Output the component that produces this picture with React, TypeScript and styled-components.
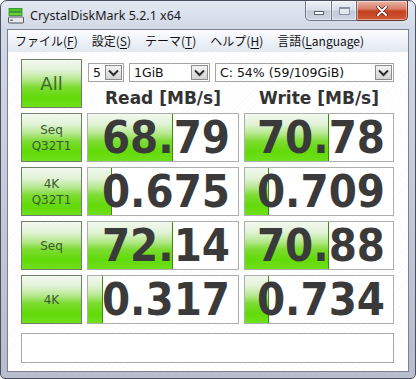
import React from 'react';
import styled, { createGlobalStyle } from 'styled-components';

const GlobalStyle = createGlobalStyle`
  html, body { margin: 0; padding: 0; background: #ffffff; }
  body { font-family: "DejaVu Sans", sans-serif; }
  * { box-sizing: border-box; }
`;

const Window = styled.div`
  width: 416px;
  height: 379px;
  border: 1px solid #4a5060;
  border-radius: 7px 7px 5px 5px;
  background: linear-gradient(180deg, #e3e9f2 0px, #d2d9e6 28px, #c4c9d8 55%, #b8bccd 100%);
  display: flex;
  flex-direction: column;
  padding: 0 6px 6px;
  overflow: hidden;
`;

const TitleBar = styled.div`
  height: 28px;
  display: flex;
  align-items: center;
  flex-shrink: 0;
`;

const TitleIcon = styled.svg`
  width: 16px;
  height: 16px;
  margin-left: 1px;
  margin-top: 1px;
`;

const TitleText = styled.span`
  margin-left: 6px;
  font-family: "Noto Sans", "DejaVu Sans", sans-serif;
  font-size: 12.5px;
  color: #1a1a1a;
`;

const Controls = styled.div`
  margin-left: auto;
  margin-right: 1px;
  align-self: flex-start;
  display: flex;
  height: 20px;
`;

const CtrlButton = styled.div<{ $kind: 'min' | 'max' | 'close' }>`
  height: 20px;
  width: ${p => (p.$kind === 'close' ? '51px' : p.$kind === 'min' ? '27px' : '25px')};
  display: flex;
  align-items: center;
  justify-content: center;
  border: 1px solid ${p => (p.$kind === 'close' ? '#6e3328' : '#6b7688')};
  border-top: none;
  border-left-width: ${p => (p.$kind === 'min' ? '1px' : '0')};
  border-radius: ${p => (p.$kind === 'min' ? '0 0 0 5px' : p.$kind === 'close' ? '0 0 5px 0' : '0')};
  background: ${p =>
    p.$kind === 'close'
      ? 'linear-gradient(180deg, #eab6a6 0%, #d9826a 40%, #c4401f 55%, #cf5a34 100%)'
      : 'linear-gradient(180deg, #edf1f7 0%, #d9e0ea 45%, #c2cbd9 55%, #cfd6e2 100%)'};
  box-shadow: inset 0 0 0 1px rgba(255, 255, 255, 0.45);
`;

const MinGlyph = styled.div`
  width: 10px;
  height: 4px;
  margin-top: 5px;
  background: #fff;
  border: 1px solid #5a6374;
`;

const MaxGlyph = styled.div`
  width: 11px;
  height: 8px;
  border: 1px solid #8a93a3;
  border-top-width: 2px;
  background: rgba(255, 255, 255, 0.5);
`;

const Client = styled.div`
  flex: 1;
  display: flex;
  flex-direction: column;
  border: 1px solid #7a8090;
  background-color: #ffffff;
`;

const MenuBar = styled.div`
  height: 22px;
  display: flex;
  align-items: center;
  background: linear-gradient(180deg, #fbfcfe 0%, #eef2f8 50%, #e3e8f1 100%);
  border-bottom: 1px solid #e4e8ef;
  flex-shrink: 0;
`;

const MenuItem = styled.span`
  padding: 0 7px;
  font-family: "Noto Sans CJK JP", "Noto Sans", sans-serif;
  font-size: 12px;
  line-height: 20px;
  color: #111;
  u { text-underline-offset: 2px; }
`;

const Content = styled.div`
  flex: 1;
  display: flex;
  flex-direction: column;
  padding: 7px 14px 8px 13px;
  background-image: repeating-linear-gradient(135deg, rgba(0,0,0,0.018) 0 1px, transparent 1px 4px);
`;

const Board = styled.div`
  display: grid;
  grid-template-columns: 61px 152px 150px;
  grid-auto-rows: 49px;
  gap: 5px;
`;

const greenGradient = `linear-gradient(180deg, #f3f8ef 0%, #e1f2d6 22%, #b4e88c 42%, #7ddc33 58%, #63da08 80%, #6fe01c 100%)`;

const TestButton = styled.div<{ $big?: boolean }>`
  border: 1px solid #6f7f6c;
  background: ${greenGradient};
  display: flex;
  flex-direction: column;
  align-items: center;
  justify-content: center;
  font-family: "DejaVu Sans", sans-serif;
  font-size: ${p => (p.$big ? '18px' : '12px')};
  line-height: ${p => (p.$big ? '20px' : '16px')};
  color: ${p => (p.$big ? '#3d6a28' : '#3b5a30')};
`;

const TopRight = styled.div`
  grid-column: 2 / 4;
  display: grid;
  grid-template-columns: 152px 150px;
  grid-template-rows: 19px 1fr;
  column-gap: 5px;
  padding-top: 4px;
`;

const SelectRow = styled.div`
  grid-column: 1 / 3;
  display: flex;
  gap: 5px;
  padding-left: 1px;
`;

const Select = styled.div<{ $w: number }>`
  width: ${p => p.$w}px;
  height: 19px;
  border: 1px solid #a4a4a4;
  background: #fff;
  display: flex;
  align-items: center;
  padding: 1px;
`;

const SelectText = styled.span`
  flex: 1;
  padding-left: 3px;
  font-family: "DejaVu Sans", sans-serif;
  font-size: 12.5px;
  color: #111;
  white-space: nowrap;
`;

const SelectArrow = styled.div`
  width: 17px;
  height: 15px;
  border: 1px solid #8c8c8c;
  background: linear-gradient(180deg, #f4f4f4 0%, #e4e4e4 50%, #d2d2d2 100%);
  display: flex;
  align-items: center;
  justify-content: center;
`;

const Header = styled.div`
  display: flex;
  align-items: center;
  justify-content: center;
  font-family: "DejaVu Sans", sans-serif;
  font-weight: bold;
  font-size: 17px;
  color: #333333;
  padding-top: 6px;
`;

const ScoreCell = styled.div`
  position: relative;
  border: 1px solid #aeaeae;
  background: #ffffff;
  display: flex;
  align-items: center;
  justify-content: flex-end;
  padding-right: 8px;
`;

const Meter = styled.div`
  position: absolute;
  left: 0;
  top: 0;
  bottom: 0;
  background: ${greenGradient};
  border-right: 1px solid #3f8a12;
`;

const ScoreText = styled.span`
  position: relative;
  font-family: "DejaVu Sans Condensed", "DejaVu Sans", sans-serif;
  font-stretch: condensed;
  font-weight: bold;
  font-size: 45px;
  line-height: 45px;
  color: #3a3a3a;
`;

const CommentBox = styled.div`
  margin-top: 9px;
  height: 30px;
  border: 1px solid #a9a9a9;
  background: #ffffff;
`;

const Chevron = () => (
  <svg width="11" height="8" viewBox="0 0 11 8">
    <path d="M1 1.5 L5.5 6 L10 1.5" fill="none" stroke="#2b2b2b" strokeWidth="2" />
  </svg>
);

const DiskIcon = () => (
  <TitleIcon viewBox="0 0 16 16">
    <rect x="1" y="0.5" width="13" height="3" fill="#49c42a" stroke="#2f8a1a" strokeWidth="0.8" />
    <rect x="1" y="4.5" width="13" height="3" fill="#6ad43a" stroke="#2f8a1a" strokeWidth="0.8" />
    <rect x="0.5" y="9" width="15" height="6" rx="1" fill="#e4e6ea" stroke="#50555e" strokeWidth="1" />
    <rect x="2.5" y="11.5" width="2" height="1.5" fill="#50555e" />
  </TitleIcon>
);

type Row = { l1: string; l2?: string; read: string; rw: number; write: string; ww: number };

const rows: Row[] = [
  { l1: 'Seq', l2: 'Q32T1', read: '68.79', rw: 85, write: '70.78', ww: 84 },
  { l1: '4K', l2: 'Q32T1', read: '0.675', rw: 24, write: '0.709', ww: 24 },
  { l1: 'Seq', read: '72.14', rw: 85, write: '70.88', ww: 84 },
  { l1: '4K', read: '0.317', rw: 15, write: '0.734', ww: 24 },
];

export default function App() {
  return (
    <>
      <GlobalStyle />
      <Window>
        <TitleBar>
          <DiskIcon />
          <TitleText>CrystalDiskMark 5.2.1 x64</TitleText>
          <Controls>
            <CtrlButton $kind="min"><MinGlyph /></CtrlButton>
            <CtrlButton $kind="max"><MaxGlyph /></CtrlButton>
            <CtrlButton $kind="close">
              <svg width="12" height="10" viewBox="0 0 12 10">
                <path d="M2 1 L10 9 M10 1 L2 9" stroke="#5a1e14" strokeWidth="3.4" strokeLinecap="round" />
                <path d="M2 1 L10 9 M10 1 L2 9" stroke="#ffffff" strokeWidth="2" strokeLinecap="round" />
              </svg>
            </CtrlButton>
          </Controls>
        </TitleBar>
        <Client>
          <MenuBar>
            <MenuItem>ファイル(<u>F</u>)</MenuItem>
            <MenuItem>設定(<u>S</u>)</MenuItem>
            <MenuItem>テーマ(<u>T</u>)</MenuItem>
            <MenuItem>ヘルプ(<u>H</u>)</MenuItem>
            <MenuItem>言語(<u>L</u>anguage)</MenuItem>
          </MenuBar>
          <Content>
            <Board>
              <TestButton $big>All</TestButton>
              <TopRight>
                <SelectRow>
                  <Select $w={36}>
                    <SelectText>5</SelectText>
                    <SelectArrow><Chevron /></SelectArrow>
                  </Select>
                  <Select $w={81}>
                    <SelectText>1GiB</SelectText>
                    <SelectArrow><Chevron /></SelectArrow>
                  </Select>
                  <Select $w={179}>
                    <SelectText>C: 54% (59/109GiB)</SelectText>
                    <SelectArrow><Chevron /></SelectArrow>
                  </Select>
                </SelectRow>
                <Header>Read [MB/s]</Header>
                <Header>Write [MB/s]</Header>
              </TopRight>
              {rows.map((r, i) => (
                <React.Fragment key={i}>
                  <TestButton>
                    <span>{r.l1}</span>
                    {r.l2 && <span>{r.l2}</span>}
                  </TestButton>
                  <ScoreCell>
                    <Meter style={{ width: r.rw }} />
                    <ScoreText>{r.read}</ScoreText>
                  </ScoreCell>
                  <ScoreCell>
                    <Meter style={{ width: r.ww }} />
                    <ScoreText>{r.write}</ScoreText>
                  </ScoreCell>
                </React.Fragment>
              ))}
            </Board>
            <CommentBox />
          </Content>
        </Client>
      </Window>
    </>
  );
}
